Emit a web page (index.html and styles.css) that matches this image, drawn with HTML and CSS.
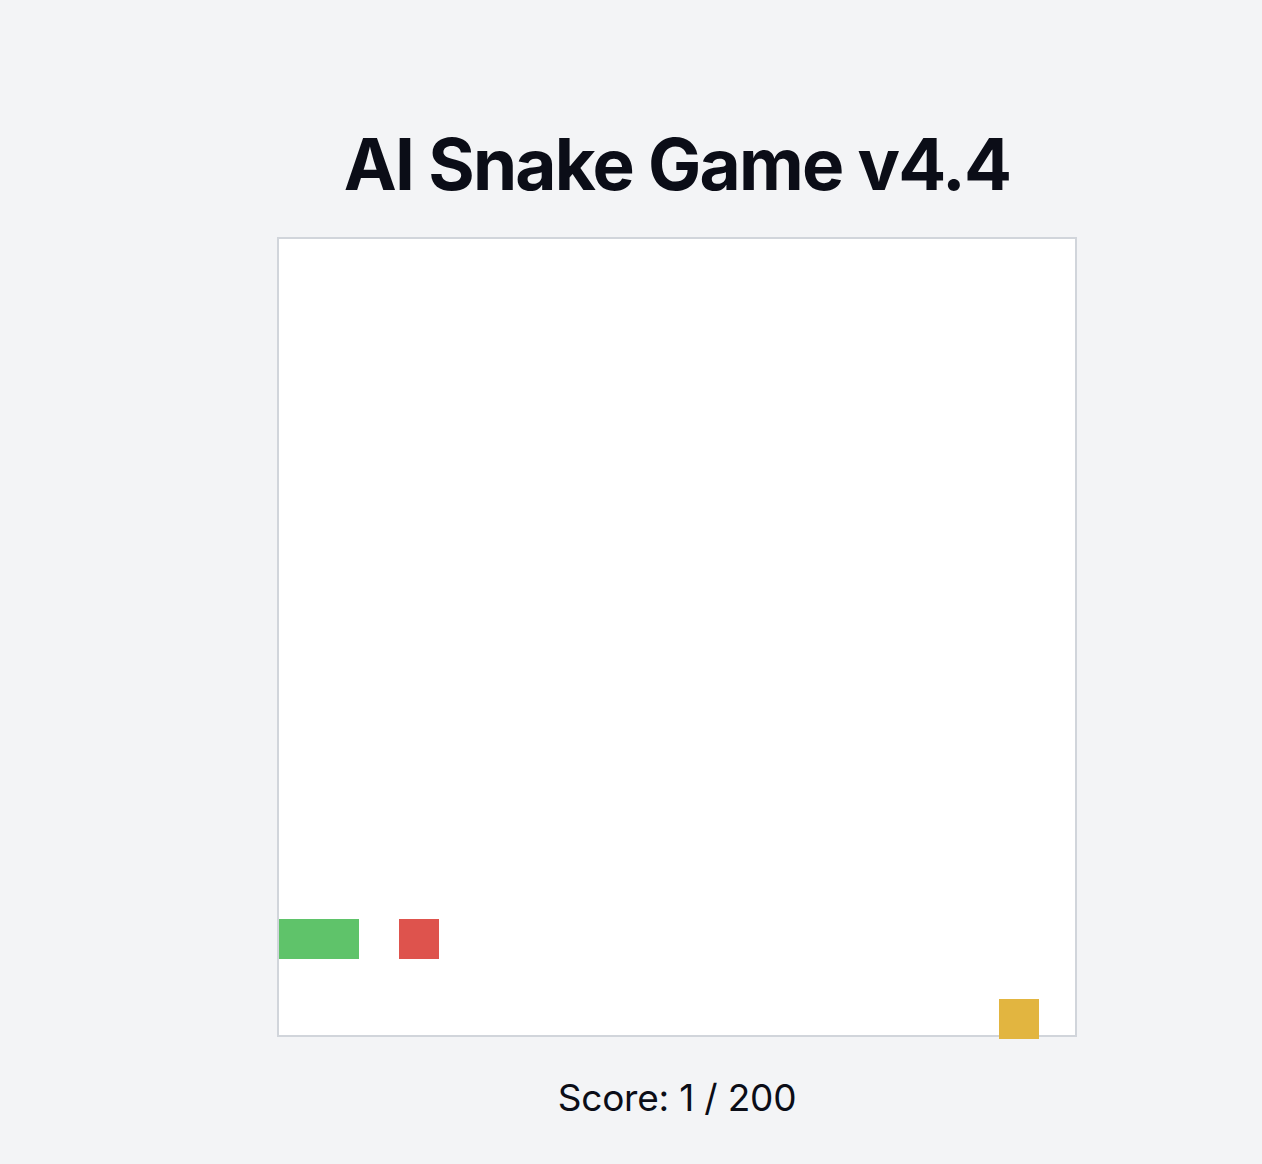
FILE: index.html
```html
<!DOCTYPE html>
<html lang="en">
<head>
<meta charset="utf-8">
<title>AI Snake Game v4.4</title>
<link rel="stylesheet" href="styles.css">
</head>
<body>
<main class="game">
  <h1 class="title">AI Snake Game v4.4</h1>
  <div class="board">
    <div class="cell snake" style="left:0px;top:680px;width:80px"></div>
    <div class="cell enemy" style="left:120px;top:680px"></div>
    <div class="cell food" style="left:720px;top:760px"></div>
  </div>
  <p class="score">Score: 1 / 200</p>
</main>
</body>
</html>
```
FILE: styles.css
```css
html, body {
  margin: 0;
  padding: 0;
  background: #f3f4f6;
}

body {
  font-family: Inter, "Noto Sans", sans-serif;
  color: #0b0d17;
}

.game {
  display: flex;
  flex-direction: column;
  align-items: center;
  padding: 108px 0 0 92px;
}

.title {
  margin: 0 0 17px;
  font-size: 71px;
  font-weight: 700;
  letter-spacing: -1.8px;
  line-height: 112px;
}

.board {
  position: relative;
  box-sizing: border-box;
  width: 800px;
  height: 800px;
  background: #ffffff;
  border: 2px solid #d1d5db;
}

.cell {
  position: absolute;
  width: 40px;
  height: 40px;
}

.snake { background: #5fc36a; }
.enemy { background: #de534d; }
.food  { background: #e2b540; }

.score {
  margin: 39px 0 0;
  font-size: 37px;
  line-height: 44px;
  letter-spacing: -0.2px;
}
```
